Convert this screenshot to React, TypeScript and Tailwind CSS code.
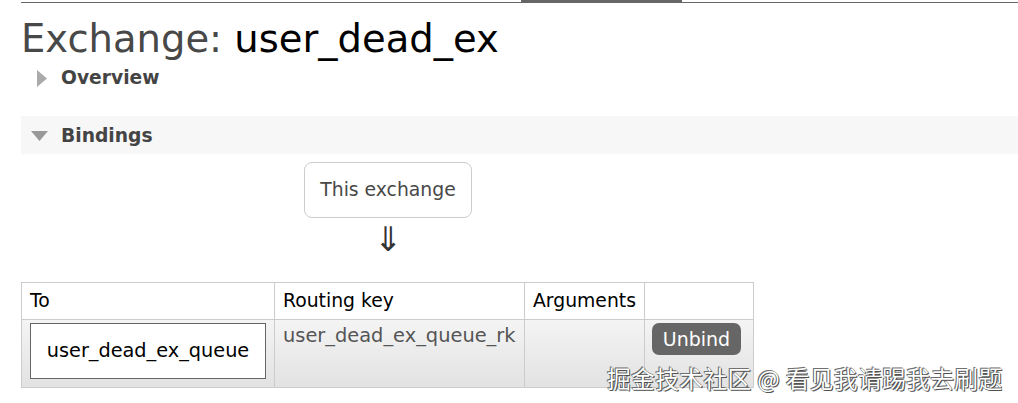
import React from 'react';

const font = { fontFamily: '"DejaVu Sans", Verdana, sans-serif' };

const Triangle = ({ open }: { open: boolean }) =>
  open ? (
    <svg width="17" height="10" viewBox="0 0 17 10" className="fill-[#999]">
      <polygon points="0,0 17,0 8.5,10" />
    </svg>
  ) : (
    <svg width="10" height="17" viewBox="0 0 10 17" className="fill-[#aaa]">
      <polygon points="0,0 10,8.5 0,17" />
    </svg>
  );

const App = () => {
  return (
    <div className="w-[1018px] h-[403px] bg-white overflow-hidden relative" style={font}>
      {/* top rule with active tab */}
      <div className="ml-[21px] h-[3px] flex items-start">
        <div className="w-[500px] h-px mt-[2px] bg-[#666]" />
        <div className="w-[161px] h-[3px] bg-[#666]" />
        <div className="flex-1 h-px mt-[2px] bg-[#666]" />
      </div>

      <div className="pl-[21px]">
        <h1 className="text-[38.5px] leading-[44px] mt-[14px] text-[#484848]">
          Exchange: <span className="text-black">user_dead_ex</span>
        </h1>

        <div className="flex items-center h-[28px] mt-[3px] pl-[16px] gap-[14px]">
          <Triangle open={false} />
          <span className="font-bold text-[18.7px] text-[#444]">Overview</span>
        </div>

        <div className="mt-[24px] h-[38px] bg-[#f7f7f7] flex items-center pl-[10px] gap-[13px] pt-[2px]">
          <Triangle open={true} />
          <span className="font-bold text-[18.7px] text-[#444]">Bindings</span>
        </div>

        <div className="flex flex-col items-center w-[734px] pt-[8px]">
          <div className="w-[168px] h-[56px] border border-[#ccc] rounded-[8px] flex items-center justify-center text-[18.8px] text-[#484848]">
            This exchange
          </div>
          <div className="h-[64px] pt-[4px] text-[34px] leading-[34px] text-[#333]">⇓</div>
        </div>

        <table className="border-collapse text-[18.8px]">
          <thead>
            <tr className="h-[37px] bg-white">
              <th className="w-[253px] border border-[#ccc] text-left font-normal px-[8px] text-black">To</th>
              <th className="w-[250px] border border-[#ccc] text-left font-normal px-[8px] text-black">Routing key</th>
              <th className="w-[119px] border border-[#ccc] text-left font-normal px-[8px] text-black">Arguments</th>
              <th className="w-[109px] border border-[#ccc]"></th>
            </tr>
          </thead>
          <tbody>
            <tr className="h-[68px] bg-gradient-to-b from-[#f4f4f4] to-[#e2e2e2]">
              <td className="border border-[#ccc] px-[8px] py-[3px] align-top">
                <div className="w-[236px] h-[56px] bg-white border border-[#666] flex items-center justify-center text-black text-[19.3px]">
                  user_dead_ex_queue
                </div>
              </td>
              <td className="border border-[#ccc] px-[8px] pt-[1px] align-top text-[#555] text-[19.4px]">user_dead_ex_queue_rk</td>
              <td className="border border-[#ccc]"></td>
              <td className="border border-[#ccc] pl-[7px] pr-[8px] pt-[3px] align-top">
                <button className="w-[89px] h-[32px] rounded-[7px] bg-[#666] text-white text-[19px] leading-none">
                  Unbind
                </button>
              </td>
            </tr>
          </tbody>
        </table>
      </div>

      <div
        className="absolute left-[607px] top-[360px] text-[23.8px] text-white tracking-[0.3px]"
        style={{
          fontFamily: '"Noto Sans CJK SC", "DejaVu Sans", sans-serif',
          textShadow: '0 0 1px #333, 1px 1px 0 #555, -1px -1px 0 #777',
        }}
      >
        掘金技术社区 @ 看见我请踢我去刷题
      </div>
    </div>
  );
};

export default App;
